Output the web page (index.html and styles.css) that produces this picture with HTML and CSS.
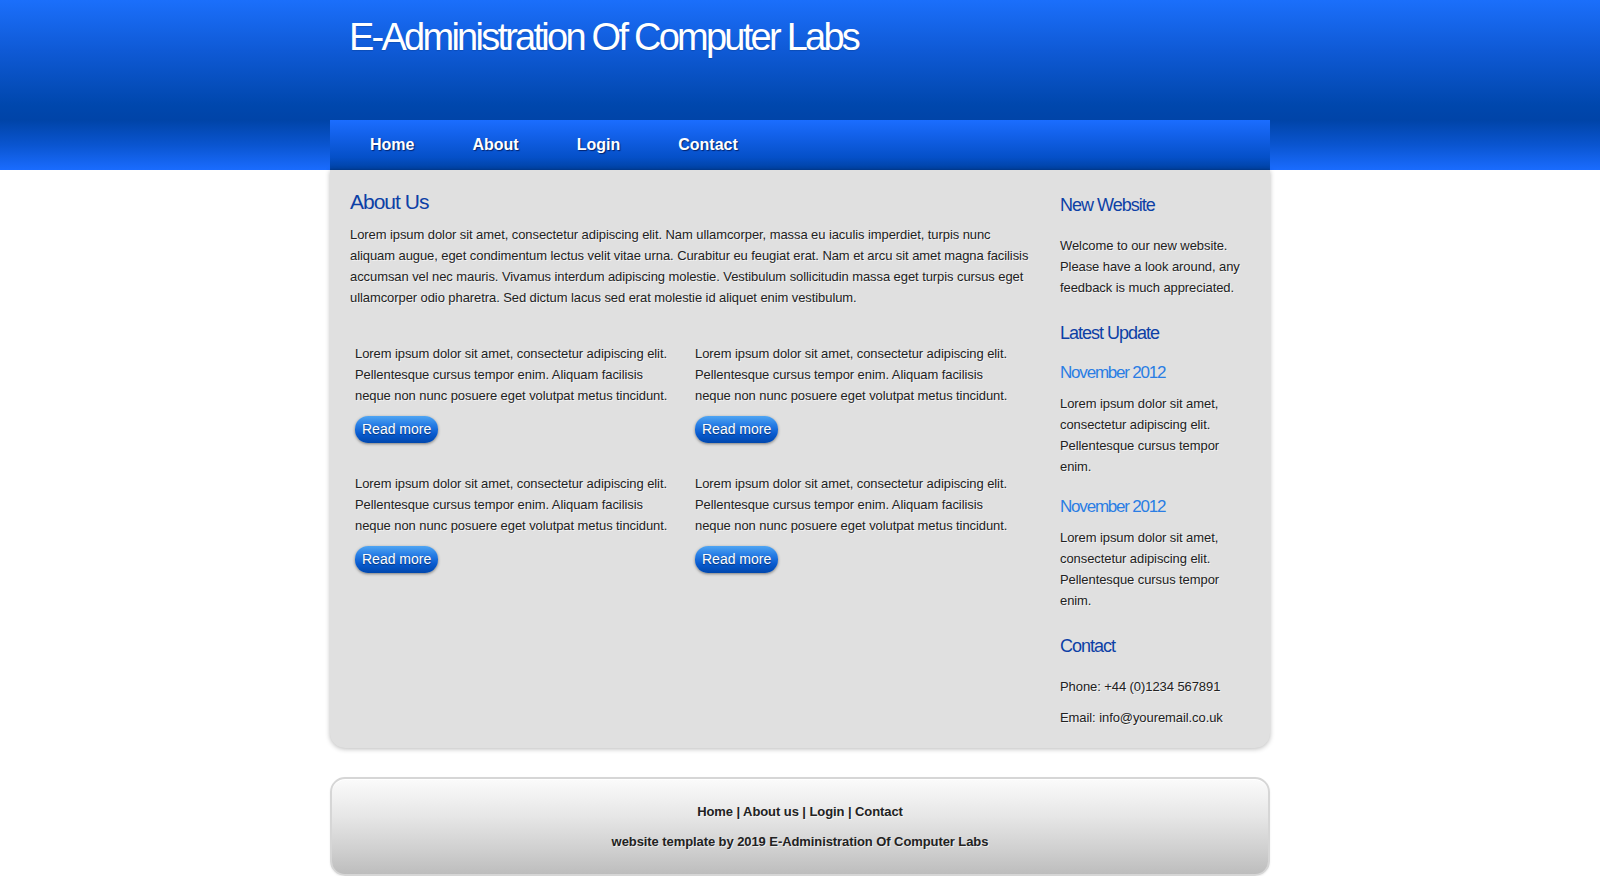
FILE: index.html
```html
<!DOCTYPE html>
<html>
<head>
<meta charset="utf-8">
<title>E-Administration Of Computer Labs</title>
<link rel="stylesheet" href="styles.css">
</head>
<body>
<header class="header">
  <div class="wrap">
    <h1 class="logo">E-Administration Of Computer Labs</h1>
    <nav class="menu">
      <a href="#">Home</a>
      <a href="#">About</a>
      <a href="#">Login</a>
      <a href="#">Contact</a>
    </nav>
  </div>
</header>
<main class="wrap main">
  <section class="content">
    <h2 class="title">About Us</h2>
    <p class="intro">Lorem ipsum dolor sit amet, consectetur adipiscing elit. Nam ullamcorper, massa eu iaculis imperdiet, turpis nunc aliquam augue, eget condimentum lectus velit vitae urna. Curabitur eu feugiat erat. Nam et arcu sit amet magna facilisis accumsan vel nec mauris. Vivamus interdum adipiscing molestie. Vestibulum sollicitudin massa eget turpis cursus eget ullamcorper odio pharetra. Sed dictum lacus sed erat molestie id aliquet enim vestibulum.</p>
    <div class="boxes">
      <div class="box">
        <p>Lorem ipsum dolor sit amet, consectetur adipiscing elit. Pellentesque cursus tempor enim. Aliquam facilisis neque non nunc posuere eget volutpat metus tincidunt.</p>
        <a class="btn" href="#">Read more</a>
      </div>
      <div class="box">
        <p>Lorem ipsum dolor sit amet, consectetur adipiscing elit. Pellentesque cursus tempor enim. Aliquam facilisis neque non nunc posuere eget volutpat metus tincidunt.</p>
        <a class="btn" href="#">Read more</a>
      </div>
      <div class="box">
        <p>Lorem ipsum dolor sit amet, consectetur adipiscing elit. Pellentesque cursus tempor enim. Aliquam facilisis neque non nunc posuere eget volutpat metus tincidunt.</p>
        <a class="btn" href="#">Read more</a>
      </div>
      <div class="box">
        <p>Lorem ipsum dolor sit amet, consectetur adipiscing elit. Pellentesque cursus tempor enim. Aliquam facilisis neque non nunc posuere eget volutpat metus tincidunt.</p>
        <a class="btn" href="#">Read more</a>
      </div>
    </div>
  </section>
  <aside class="sidebar">
    <h3 class="side-title">New Website</h3>
    <p class="side-text first">Welcome to our new website. Please have a look around, any feedback is much appreciated.</p>
    <h3 class="side-title latest">Latest Update</h3>
    <h4 class="date">November 2012</h4>
    <p class="side-text news">Lorem ipsum dolor sit amet, consectetur adipiscing elit. Pellentesque cursus tempor enim.</p>
    <h4 class="date">November 2012</h4>
    <p class="side-text news last">Lorem ipsum dolor sit amet, consectetur adipiscing elit. Pellentesque cursus tempor enim.</p>
    <h3 class="side-title contact">Contact</h3>
    <p class="side-text phone">Phone: +44 (0)1234 567891</p>
    <p class="side-text">Email: info@youremail.co.uk</p>
  </aside>
</main>
<footer class="wrap footer">
  <p class="footer-links"><a href="#">Home</a> | <a href="#">About us</a> | <a href="#">Login</a> | <a href="#">Contact</a></p>
  <p class="footer-credit">website template by 2019 E-Administration Of Computer Labs</p>
</footer>
</body>
</html>
```

FILE: styles.css
```css
* { box-sizing: border-box; }

body {
  margin: 0;
  font-family: "Liberation Sans", Arial, sans-serif;
  font-size: 13px;
  color: #222;
  background: #fff;
}

p { margin: 0; letter-spacing: -0.08px; }

.wrap {
  width: 940px;
  margin: 0 auto;
}

.header {
  height: 170px;
  background: linear-gradient(to bottom, #1b6ffb 0px, #0f5ad6 50px, #0047ad 105px, #0044a8 120px, #0a55d0 145px, #1a6cff 170px);
}

.logo {
  margin: 0;
  height: 120px;
  padding: 15px 0 0 19px;
  font-size: 38px;
  line-height: 44px;
  font-weight: normal;
  letter-spacing: -2.75px;
  color: #fff;
  text-shadow: 0 1px 1px rgba(0, 0, 0, 0.15);
}

.menu {
  height: 50px;
  display: flex;
  align-items: center;
  gap: 58px;
  padding-left: 40px;
  background: linear-gradient(to bottom, #1b6dff 0%, #115fe6 35%, #0550c8 75%, #0043a6 96%, #003c96 100%);
}

.menu a {
  color: #fff;
  font-weight: bold;
  font-size: 16px;
  text-decoration: none;
  text-shadow: 1px 1px 1px rgba(0, 0, 40, 0.6);
}

.main {
  display: flex;
  gap: 25px;
  padding: 20px 20px 20px 20px;
  background: #e0e0e0;
  border-radius: 0 0 15px 15px;
  box-shadow: 0 1px 5px rgba(0, 0, 0, 0.28);
}

.main p, .footer p {
  text-shadow: 1px 1px 0 rgba(255, 255, 255, 0.6);
}

.content {
  width: 685px;
}

.title {
  margin: -1px 0 10px 0;
  font-size: 21px;
  line-height: 25px;
  font-weight: normal;
  letter-spacing: -1px;
  color: #0d40a6;
}

.intro {
  line-height: 21px;
}

.boxes {
  display: grid;
  grid-template-columns: 320px 320px;
  column-gap: 20px;
  row-gap: 30px;
  margin: 35px 0 0 5px;
}

.box p {
  line-height: 21px;
  margin-bottom: 10px;
}

.btn {
  display: inline-block;
  height: 27px;
  padding: 0 7px;
  line-height: 26px;
  font-size: 14px;
  color: #fff;
  text-decoration: none;
  border-radius: 13px;
  background: linear-gradient(to bottom, #4fa5f2 0%, #2a80e6 30%, #0a5cd0 65%, #0047ad 100%);
  box-shadow: 0 1px 3px rgba(0, 0, 0, 0.45);
  text-shadow: 0 1px 1px rgba(0, 0, 0, 0.45);
}

.sidebar {
  width: 190px;
  padding-top: 4px;
}

.side-title {
  margin: 0 0 19px 0;
  font-size: 18px;
  line-height: 22px;
  font-weight: normal;
  letter-spacing: -1px;
  color: #0d40a6;
}

.side-title.latest { margin-bottom: 18px; }
.side-title.contact { margin-bottom: 19px; }

.side-text {
  line-height: 21px;
}

.side-text.first { margin-bottom: 24px; }
.side-text.news { margin-bottom: 19px; }
.side-text.news.last { margin-bottom: 24px; }
.side-text.phone { margin-bottom: 10px; }

.date {
  margin: 0 0 10px 0;
  font-size: 17px;
  line-height: 21px;
  font-weight: normal;
  letter-spacing: -1.2px;
  color: #2a7de4;
}

.footer {
  margin-top: 29px;
  padding: 18px 0 17px 0;
  border: 2px solid #d6d6d6;
  border-radius: 15px;
  background: linear-gradient(to bottom, #fbfbfb 0%, #e6e6e6 40%, #cfcfcf 75%, #bdbdbd 100%);
  box-shadow: inset 0 1px 0 #fff, 0 1px 2px rgba(0, 0, 0, 0.08);
  text-align: center;
  font-weight: bold;
  color: #222;
  line-height: 30px;
}

.footer a {
  color: #222;
  text-decoration: none;
}
```
